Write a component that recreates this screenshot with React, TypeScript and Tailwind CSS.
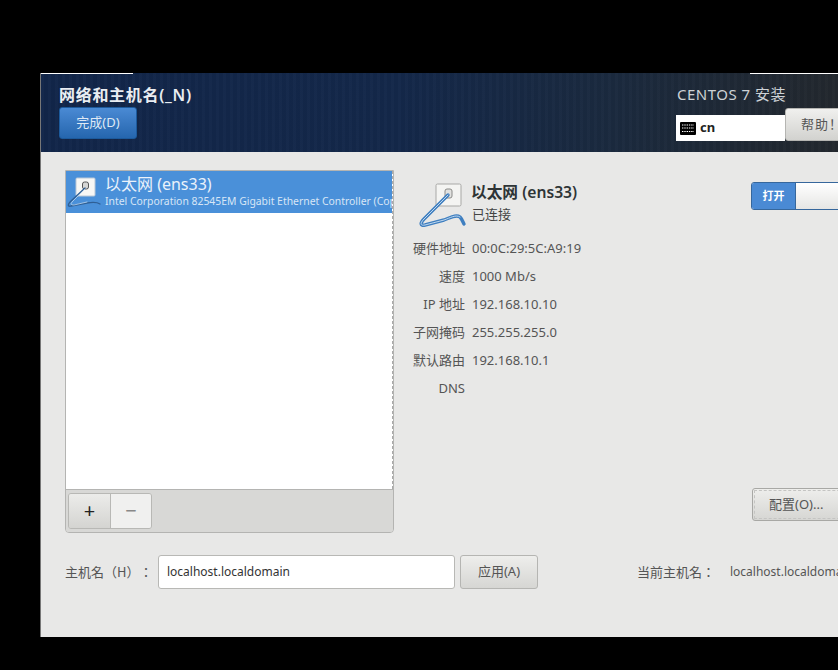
const font = { fontFamily: '"Noto Sans", "Noto Sans CJK SC", sans-serif' };

const details = [
  ["硬件地址", "00:0C:29:5C:A9:19"],
  ["速度", "1000 Mb/s"],
  ["IP 地址", "192.168.10.10"],
  ["子网掩码", "255.255.255.0"],
  ["默认路由", "192.168.10.1"],
  ["DNS", ""],
];

const SmallIcon = () => (
  <svg width={36} height={36} viewBox="0 0 36 36" fill="none" className="shrink-0">
    <rect x="9" y="4" width="19" height="18" rx="1" fill="#f7f7f5" stroke="#b9c7d6" />
    <rect x="15.5" y="8" width="6" height="7" rx="2" fill="#d6d6d4" stroke="#555" />
    <path d="M18 14 L4 27 C0 31 1 33 4 32 L20 29 C26 28 30 28 33 30" stroke="#2f5f95" strokeWidth="1.3" strokeLinecap="round" />
    <path d="M18 15 L6 27 C3 30 4 31 7 31 L20 28" stroke="#bcd6ee" strokeWidth="0.8" strokeLinecap="round" />
  </svg>
);

const LargeIcon = () => (
  <svg width={50} height={50} viewBox="0 0 50 50" fill="none" className="shrink-0">
    <rect x="18" y="2" width="25" height="22" rx="1.5" fill="#f4f4f2" stroke="#a8a8a6" />
    <rect x="27" y="7" width="7" height="9" rx="2" fill="#e2e2e0" stroke="#8a8a88" />
    <path d="M30 13 L6 37 C2 41 2 44 7 43 L26 38 C32 36 38 32 42 35 C44 37 45 40 46 42" stroke="#3f7fc0" strokeWidth="3.4" strokeLinecap="round" strokeLinejoin="round" />
    <path d="M30 13 L6 37 C2 41 2 44 7 43 L26 38 C32 36 38 32 42 35" stroke="#bfd8ef" strokeWidth="1" strokeLinecap="round" />
  </svg>
);

const KeyboardIcon = () => (
  <svg width={16} height={13} viewBox="0 0 16 13" className="shrink-0">
    <rect x="0" y="0" width="16" height="13" rx="1" fill="#000" />
    <path d="M2 3h12M2 6h12M2 9.5h12" stroke="#fff" strokeWidth="1" strokeDasharray="1.4 0.9" />
  </svg>
);

export default function App() {
  return (
    <div className="w-[838px] h-[670px] bg-black overflow-hidden pt-[73px] pl-[40px] [text-spacing-trim:space-all]" style={font}>
      <div className="w-[798px] h-[564px] flex flex-col overflow-hidden border-l border-[#777]">
        {/* top bar */}
        <div className="h-[79px] shrink-0 flex flex-col bg-[repeating-linear-gradient(90deg,rgba(255,255,255,0.012)_0px,rgba(255,255,255,0.012)_3px,rgba(0,0,0,0.03)_3px,rgba(0,0,0,0.03)_7px),linear-gradient(90deg,#12264a_0%,#14284a_45%,#1b2a3f_72%,#23282e_100%)]">
          <div className="h-px shrink-0 flex justify-between">
            <div className="w-[92px] bg-white"></div>
            <div className="w-[88px] bg-white"></div>
          </div>
          <div className="flex-1 flex justify-between">
            <div className="pl-[18px] pt-[11px]">
              <h1 className="text-[16px] leading-[20px] font-semibold tracking-[0.7px] text-[#e9edf2]">网络和主机名(_N)</h1>
              <button className="mt-[2px] w-[78px] h-[32px] rounded-[3px] border border-[#1c5a9c] bg-gradient-to-b from-[#4a8ad4] to-[#2566ae] text-[13px] text-[#dfe9f5]">
                完成(D)
              </button>
            </div>
            <div className="w-[162px] shrink-0 pt-[10px]">
              <div className="ml-[1px] text-[15px] leading-[20px] tracking-[0.5px] text-[#cdd2d6]">CENTOS 7 安装</div>
              <div className="flex items-end mt-[4px]">
                <div className="w-[109px] h-[26px] shrink-0 bg-white flex items-center pl-[4px] gap-[4px] text-[13px] font-bold text-[#222]">
                  <KeyboardIcon />
                  cn
                </div>
                <button className="w-[70px] h-[33px] shrink-0 rounded-[3px] border border-[#b5b5b2] bg-gradient-to-b from-[#f0f0ee] to-[#d2d2cf] text-[13px] tracking-[1px] text-[#555] text-left pl-[15px] whitespace-nowrap">
                  帮助！
                </button>
              </div>
            </div>
          </div>
        </div>

        {/* body */}
        <div className="flex-1 bg-[#e8e8e7] pl-[24px] pt-[18px]">
          <div className="flex h-[363px]">
            <div className="w-[329px] shrink-0 flex flex-col rounded-b-[4px] border border-[#b4b4b2] overflow-hidden">
              <div className="flex-1 bg-white border-r border-dashed border-[#aaa]">
                <div className="h-[42px] bg-[#4a90d9] flex items-center pl-[1px] overflow-hidden whitespace-nowrap">
                  <SmallIcon />
                  <div className="ml-[2px] text-[#eaf2fb]">
                    <div className="text-[16px] leading-[20px] -mt-[2px]">以太网 (ens33)</div>
                    <div className="text-[10.4px] leading-[13px] mt-[1px] text-[#d8e6f6]">Intel Corporation 82545EM Gigabit Ethernet Controller (Copper)</div>
                  </div>
                </div>
              </div>
              <div className="h-[43px] shrink-0 bg-[#d8d8d6] border-t border-[#b4b4b2] pl-[2px] pt-[3px]">
                <div className="flex w-[84px] h-[36px] rounded-[3px] border border-[#b8b8b5] overflow-hidden">
                  <button className="w-[42px] bg-gradient-to-b from-[#ececea] to-[#d4d4d1] border-r border-[#b8b8b5] text-[20px] leading-none text-[#222]">+</button>
                  <button className="flex-1 bg-[#f0f0ef] text-[20px] leading-none text-[#888]">−</button>
                </div>
              </div>
            </div>

            <div className="flex-1 flex justify-between min-w-0 pl-[18px]">
              <div className="pt-[12px]">
                <div className="flex">
                  <div className="w-[60px] pl-[6px] shrink-0">
                    <LargeIcon />
                  </div>
                  <div>
                    <div className="-ml-[1px] text-[15.7px] leading-[20px] font-semibold text-[#2e3436]">以太网 (ens33)</div>
                    <div className="mt-[3px] text-[13px] leading-[18px] text-[#444]">已连接</div>
                  </div>
                </div>
                <div className="mt-[3px]">
                  {details.map(([k, v]) => (
                    <div key={k} className="flex h-[28px] items-center text-[13px] text-[#555]">
                      <div className="w-[53px] text-right whitespace-nowrap">{k}</div>
                      <div className="ml-[7px] whitespace-nowrap">{v}</div>
                    </div>
                  ))}
                </div>
              </div>
              <div className="w-[87px] shrink-0 pt-[12px] pb-[12px] flex flex-col justify-between">
                <div className="flex w-[100px] h-[28px] rounded-[3px] border border-[#36679c] overflow-hidden">
                  <div className="w-[44px] bg-[#4a8ad4] flex items-center justify-center text-[11px] font-bold text-white border-r border-[#36679c]">打开</div>
                  <div className="flex-1 bg-gradient-to-b from-white to-[#e6e6e4]"></div>
                </div>
                <button className="ml-[1px] w-[100px] h-[33px] rounded-[3px] border border-[#a8a8a5] bg-gradient-to-b from-[#eeeeec] to-[#d6d6d3] text-[13px] text-[#555] text-left pl-[16px] outline-1 outline-dashed -outline-offset-3 outline-[#c4c4c2]">配置(O)...</button>
              </div>
            </div>
          </div>

          <div className="flex items-center mt-[22px] h-[34px] whitespace-nowrap text-[13px] text-[#555]">
            <span className="w-[93px] shrink-0 font-['Noto_Sans_CJK_TC']">主机名（H）：</span>
            <div className="w-[297px] h-[34px] shrink-0 bg-white rounded-[3px] border border-[#b8b8b5] flex items-center pl-[8px] text-[12px] text-[#333]">localhost.localdomain</div>
            <button className="ml-[5px] w-[78px] h-[34px] shrink-0 rounded-[3px] border border-[#b5b5b2] bg-gradient-to-b from-[#eeeeec] to-[#d6d6d3] text-[#555]">应用(A)</button>
            <span className="ml-[99px] w-[93px] shrink-0 font-['Noto_Sans_CJK_TC']">当前主机名：</span>
            <span className="text-[12px]">localhost.localdomain</span>
          </div>
        </div>
      </div>
    </div>
  );
}
